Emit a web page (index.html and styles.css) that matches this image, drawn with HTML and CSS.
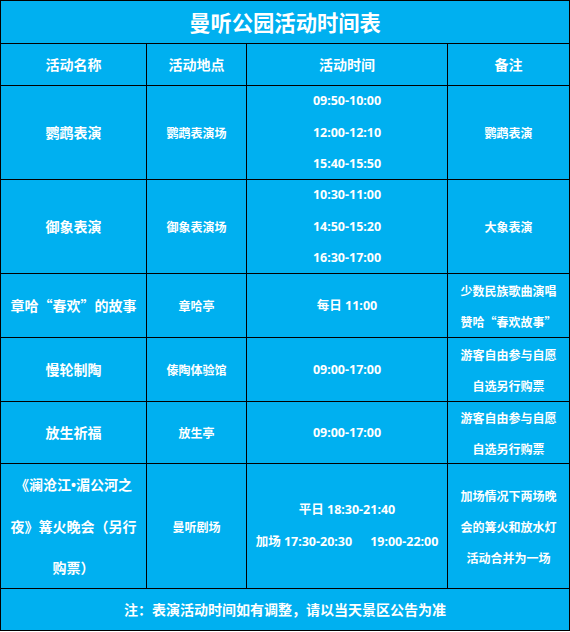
FILE: index.html
```html
<!DOCTYPE html>
<html lang="zh-CN">
<head>
<meta charset="utf-8">
<title>曼听公园活动时间表</title>
<link rel="stylesheet" href="styles.css">
</head>
<body>
<div class="sheet">
  <div class="cell title">曼听公园活动时间表</div>

  <div class="cell head">活动名称</div>
  <div class="cell head">活动地点</div>
  <div class="cell head">活动时间</div>
  <div class="cell head">备注</div>

  <div class="cell name">鹦鹉表演</div>
  <div class="cell place">鹦鹉表演场</div>
  <div class="cell time tall"><p class="t">09:50-10:00<br>12:00-12:10<br>15:40-15:50</p></div>
  <div class="cell note">鹦鹉表演</div>

  <div class="cell name">御象表演</div>
  <div class="cell place">御象表演场</div>
  <div class="cell time tall"><p class="t">10:30-11:00<br>14:50-15:20<br>16:30-17:00</p></div>
  <div class="cell note">大象表演</div>

  <div class="cell name">章哈“春欢”的故事</div>
  <div class="cell place">章哈亭</div>
  <div class="cell time">每日 11:00</div>
  <div class="cell note"><p class="t">少数民族歌曲演唱<br>赞哈“春欢故事”</p></div>

  <div class="cell name">慢轮制陶</div>
  <div class="cell place">傣陶体验馆</div>
  <div class="cell time">09:00-17:00</div>
  <div class="cell note"><p class="t">游客自由参与自愿<br>自选另行购票</p></div>

  <div class="cell name">放生祈福</div>
  <div class="cell place">放生亭</div>
  <div class="cell time">09:00-17:00</div>
  <div class="cell note"><p class="t">游客自由参与自愿<br>自选另行购票</p></div>

  <div class="cell name wide"><p class="t">《澜沧江<span class="dot">•</span>湄公河之<br>夜》篝火晚会（另行<br>购票）</p></div>
  <div class="cell place">曼听剧场</div>
  <div class="cell time mid"><p class="t">平日 18:30-21:40<br>加场 17:30-20:30<span class="gap">19:00-22:00</span></p></div>
  <div class="cell note"><p class="t">加场情况下两场晚<br>会的篝火和放水灯<br>活动合并为一场</p></div>

  <div class="cell foot">注：表演活动时间如有调整，请以当天景区公告为准</div>
</div>
</body>
</html>
```

FILE: styles.css
```css
html, body {
  margin: 0;
  padding: 0;
  background: #ffffff;
}

.sheet {
  width: 570px;
  box-sizing: border-box;
  display: grid;
  grid-template-columns: 145px 99px 200px 121px;
  grid-template-rows: 42px 41px 93px 93px 63px 63px 61px 124px 41px;
  gap: 1px;
  padding: 1px;
  background: #000000;
  font-family: "Noto Sans CJK SC", "Noto Sans", sans-serif;
  font-weight: 700;
  color: #ffffff;
}

.cell {
  background: #00b0f0;
  display: flex;
  align-items: center;
  justify-content: center;
  text-align: center;
  font-size: 12px;
  line-height: 31px;
  white-space: nowrap;
  overflow: visible;
}

.t {
  margin: 0;
}

.title {
  grid-column: 1 / -1;
  font-size: 21.3px;
  line-height: 30px;
}

.head {
  font-size: 14px;
}

.name {
  font-size: 14px;
}

.name.wide {
  line-height: 41px;
}

.dot {
  font-family: "Liberation Sans", sans-serif;
}

.time {
  font-family: "Noto Sans", "Noto Sans CJK SC", sans-serif;
  font-size: 12.5px;
}

.time.tall {
  line-height: 31.5px;
}

.time.mid {
  line-height: 32px;
}

.gap {
  margin-left: 18px;
}

.foot {
  grid-column: 1 / -1;
  font-size: 14px;
}
```
